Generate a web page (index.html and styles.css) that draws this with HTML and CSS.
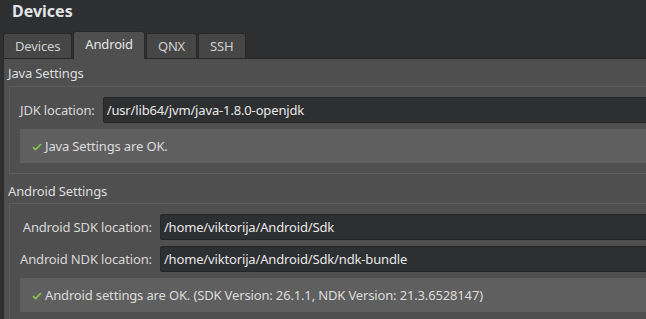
FILE: index.html
```html
<!DOCTYPE html>
<html lang="en">
<head>
    <meta charset="UTF-8">
    <meta name="viewport" content="width=device-width, initial-scale=1.0">
    <title>Devices</title>
    <link rel="stylesheet" href="styles.css">
</head>
<body>
    <h1 class="page-title">Devices</h1>

    <div class="tab-bar">
        <div class="tab">Devices</div>
        <div class="tab active">Android</div>
        <div class="tab">QNX</div>
        <div class="tab">SSH</div>
    </div>

    <div class="tab-panel">
        <!-- Java settings -->
        <div class="group-title">Java Settings</div>
        <div class="group-box">
            <div class="form-grid">
                <label class="form-label" for="jdk-location">JDK location:</label>
                <input class="path-input" id="jdk-location" type="text" value="/usr/lib64/jvm/java-1.8.0-openjdk" readonly>
            </div>
            <div class="status-box">
                <svg class="check-icon" width="10" height="8" viewBox="0 0 10 8" aria-hidden="true">
                    <path d="M1 4.2 L3.6 6.6 L9 1" fill="none" stroke="currentColor" stroke-width="1.8"/>
                </svg>
                <span>Java Settings are OK.</span>
            </div>
        </div>

        <!-- Android settings -->
        <div class="group-title second">Android Settings</div>
        <div class="group-box">
            <div class="form-grid">
                <label class="form-label" for="sdk-location">Android SDK location:</label>
                <input class="path-input" id="sdk-location" type="text" value="/home/viktorija/Android/Sdk" readonly>
                <label class="form-label" for="ndk-location">Android NDK location:</label>
                <input class="path-input" id="ndk-location" type="text" value="/home/viktorija/Android/Sdk/ndk-bundle" readonly>
            </div>
            <div class="status-box">
                <svg class="check-icon" width="10" height="8" viewBox="0 0 10 8" aria-hidden="true">
                    <path d="M1 4.2 L3.6 6.6 L9 1" fill="none" stroke="currentColor" stroke-width="1.8"/>
                </svg>
                <span>Android settings are OK. (SDK Version: 26.1.1, NDK Version: 21.3.6528147)</span>
            </div>
        </div>
    </div>
</body>
</html>
```

FILE: styles.css
```css
html, body {
    height: 100%;
    overflow: hidden;
}

body {
    margin: 0;
    background-color: #2e2f31;
    color: #dcdcdc;
    font-family: "Noto Sans", "Open Sans", sans-serif;
    font-size: 13px;
    letter-spacing: -0.15px;
}

.page-title {
    margin: 0 0 9px 12px;
    font-size: 16px;
    font-weight: bold;
    line-height: 22px;
    letter-spacing: 0;
    color: #e2e4e8;
}

.tab-bar {
    display: flex;
    align-items: flex-end;
    gap: 1px;
    margin-left: 3px;
}

.tab {
    box-sizing: border-box;
    height: 25px;
    padding: 0 11px;
    line-height: 24px;
    background-color: #464646;
    border: 1px solid #282828;
    border-bottom: none;
    border-radius: 3px 3px 0 0;
    color: #cfd0d2;
}

.tab.active {
    position: relative;
    z-index: 1;
    height: 28px;
    margin-bottom: -1px;
    line-height: 24px;
    background-color: #4f4f4f;
    color: #e6e6e6;
}

.tab-panel {
    margin: 0 -20px 0 3px;
    padding: 5px 0 0 4px;
    min-height: 300px;
    background-color: #4f4f4f;
    border-top: 1px solid #282828;
    border-left: 1px solid #2c2c2c;
}

.group-title {
    line-height: 18px;
    margin-bottom: 4px;
    color: #dedede;
}

.group-title.second {
    margin-top: 8px;
    margin-bottom: 3px;
}

.group-box {
    margin-left: 1px;
    padding: 10px;
    border: 1px solid #5c5c5c;
    border-right: none;
}

.form-grid {
    display: grid;
    grid-template-columns: auto 1fr;
    column-gap: 8px;
    row-gap: 6px;
    align-items: center;
}

.form-label {
    text-align: right;
    color: #d8d8d8;
}

.path-input {
    box-sizing: border-box;
    height: 26px;
    margin: 0;
    padding: 0 3px;
    font: inherit;
    letter-spacing: inherit;
    color: #e8e8e8;
    background-color: #2e2f31;
    border: 1px solid #252627;
    border-radius: 2px;
    outline: none;
}

.status-box {
    display: flex;
    align-items: center;
    gap: 3px;
    height: 34px;
    margin-top: 6px;
    padding-left: 12px;
    background-color: #5f5f5f;
    color: #dcdcdc;
    white-space: nowrap;
}

.check-icon {
    color: #8cc152;
    margin-top: 1px;
}
```
